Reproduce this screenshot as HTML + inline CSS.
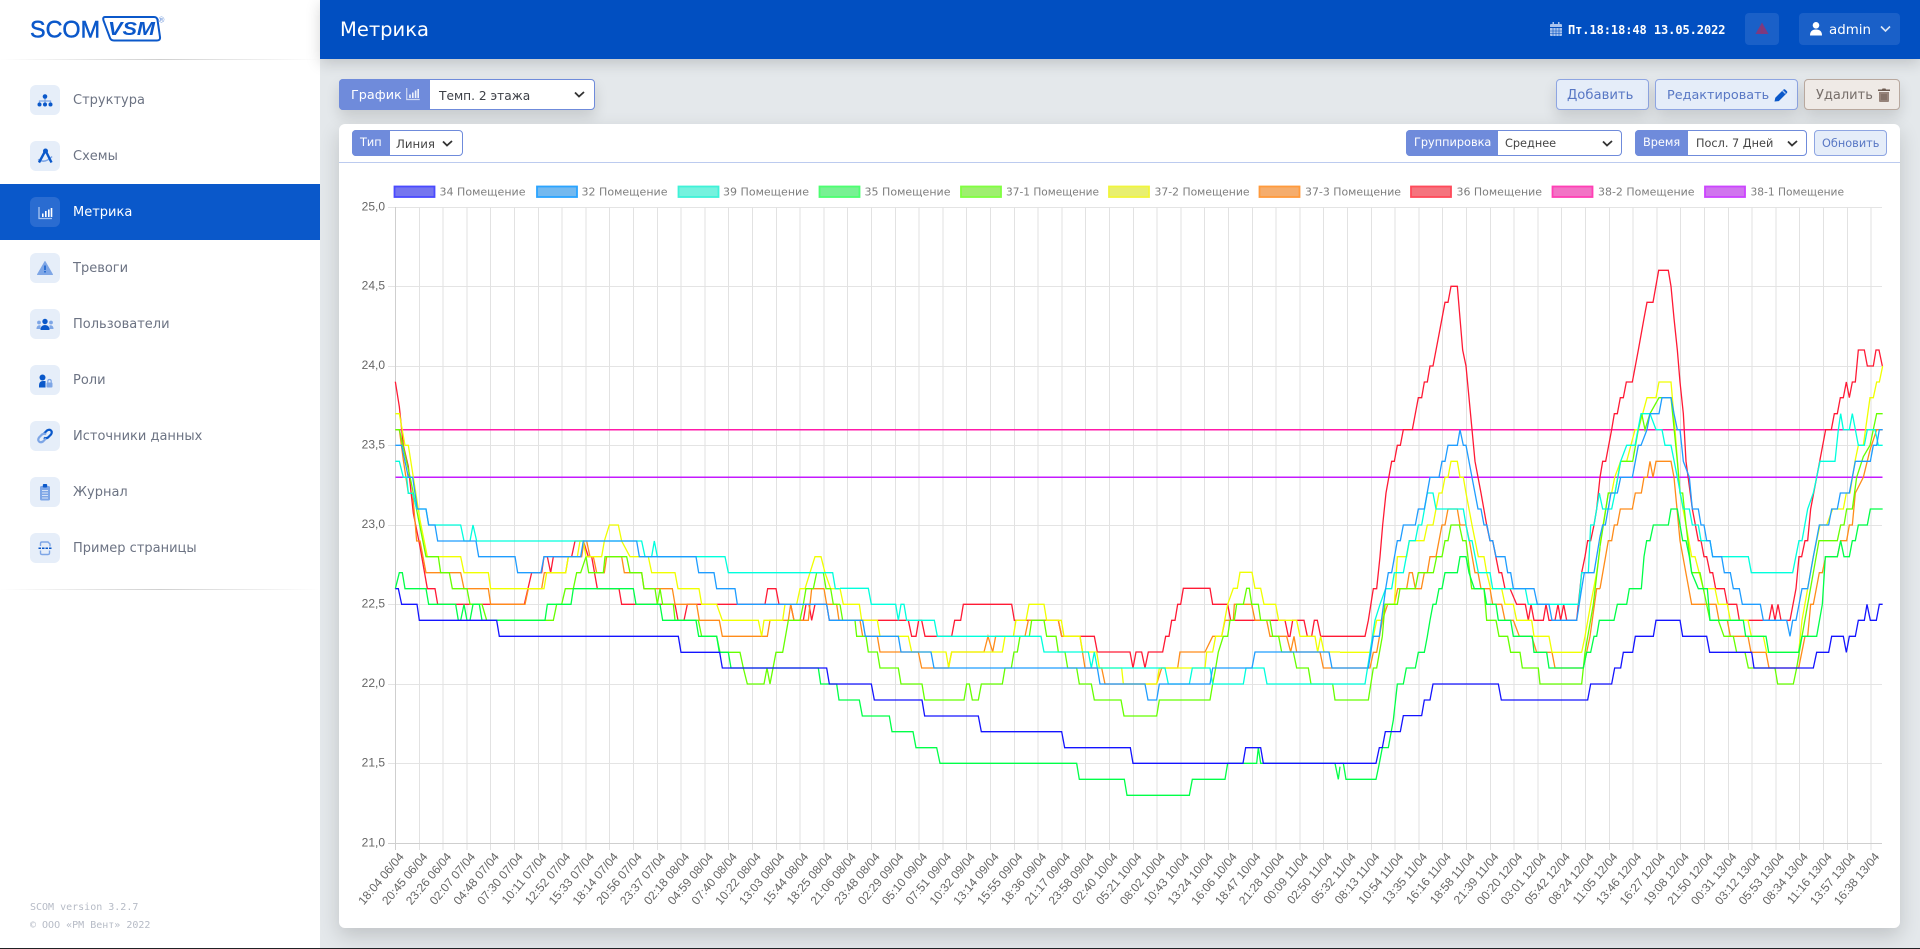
<!DOCTYPE html>
<html lang="ru">
<head>
<meta charset="utf-8">
<title>Метрика</title>
<style>
*{box-sizing:border-box}
html,body{margin:0;padding:0}
body{position:relative;width:1920px;height:949px;overflow:hidden;background:#e4e8eb;font-family:"DejaVu Sans","Liberation Sans",sans-serif;color:#333}
.abs{position:absolute}
#sidebar{position:absolute;left:0;top:0;width:320px;height:949px;background:#fff}
.hr{position:absolute;left:0;width:320px;height:1px;background:linear-gradient(90deg,rgba(200,200,200,0),#d0d0d0 50%,rgba(200,200,200,0))}
.item{position:absolute;left:0;width:320px;height:56px;font-size:13px;color:#6c7383;line-height:56px}
.item.on{background:#0a58ca;color:#fff}
.item .ico{position:absolute;left:30px;top:13px;width:30px;height:30px;border-radius:6px;background:#e6eef9}
.item.on .ico{background:#2a6cd1}
.item span{position:absolute;left:73px;top:1px}
.item svg{display:block}
#foot{position:absolute;left:30px;top:899px;font:10px/17.5px "DejaVu Sans Mono","Liberation Mono",monospace;color:#b6bbc6;white-space:nowrap}
#head{position:absolute;left:320px;top:0;width:1600px;height:59px;background:#014fc1;box-shadow:0 4px 14px rgba(0,0,0,.16)}
#title{position:absolute;left:340px;top:17px;font-size:19.5px;line-height:26px;color:#fff}
#date{position:absolute;left:1568px;top:22px;font:bold 12px/16px "DejaVu Sans Mono","Liberation Mono",monospace;color:#fff;white-space:nowrap;letter-spacing:-.07px}
.hbtn{position:absolute;top:13px;height:32px;border-radius:4px;background:#1a60c8}
.btn{position:absolute;border:1px solid #8ea5e2;background:#e5edf9;color:#5877c4;border-radius:4px;font-size:13.2px;white-space:nowrap;text-align:left}
.sh{box-shadow:0 7px 14px rgba(0,0,0,.13)}
.grp{position:absolute;border:1px solid #6f8bdb;border-radius:4px;background:#fff;white-space:nowrap;color:#444}
.grp .l{position:absolute;left:-1px;top:-1px;bottom:-1px;background:#6f8bdb;color:#fff;border-radius:4px 0 0 4px}
.grp .t{position:absolute;color:#444}
.chev{position:absolute}
#card{position:absolute;left:339px;top:124px;width:1561px;height:804px;background:#fff;border-radius:6px;box-shadow:0 8px 20px rgba(0,0,0,.16)}
#sep{position:absolute;left:339px;top:162px;width:1561px;height:1px;background:#bccbef}
#chart{position:absolute;left:0;top:0;width:1920px;height:949px}
#bottom{position:absolute;left:0;top:948px;width:1920px;height:1px;background:#202124}
.s{fill:none;stroke-width:3.9;stroke-linejoin:miter}
.c34{stroke:#1414ff}.c32{stroke:#1f9dff}.c39{stroke:#00ffdd}.c35{stroke:#00ff48}.c371{stroke:#66ff00}.c372{stroke:#f0ff00}.c373{stroke:#ff8c1a}.c36{stroke:#ff1a35}
</style>
</head>
<body>

<div id="sidebar">
  <svg class="abs" style="left:0;top:0" width="180" height="58">
    <text x="30" y="37.5" font-family="Liberation Sans,sans-serif" font-size="24.5" fill="#0b58ca" stroke="#0b58ca" stroke-width=".5" textLength="70" lengthAdjust="spacingAndGlyphs">SCOM</text>
    <path d="M105 17H154Q157 17 157.5 20L160 37Q160.5 40.5 157 40.5H114Q111 40.5 110 38L103.5 20.5Q102.5 17 105 17Z" fill="none" stroke="#0b58ca" stroke-width="2"/>
    <text x="108" y="35" font-family="Liberation Sans,sans-serif" font-weight="700" font-style="italic" font-size="18" fill="#0b58ca" textLength="47" lengthAdjust="spacingAndGlyphs">VSM</text>
    <text x="158.5" y="22.5" font-family="Liberation Sans,sans-serif" font-size="8" fill="#5d8ad6">®</text>
  </svg>
  <div class="hr" style="top:59px"></div>

  <div class="item" style="top:72px"><div class="ico"><svg width="30" height="30"><path d="M15 12v4M9.500 19v-3h11v3M15 16v3" fill="none" stroke="#7ea6e6" stroke-width="1.300"/><circle cx="15" cy="11.500" r="2.300" fill="#0a58ca"/><circle cx="9.500" cy="19.500" r="2" fill="#0a58ca"/><circle cx="15" cy="19.500" r="2" fill="#0a58ca"/><circle cx="20.500" cy="19.500" r="2" fill="#0a58ca"/></svg></div><span>Структура</span></div>
  <div class="item" style="top:128px"><div class="ico"><svg width="30" height="30"><path d="M8 18.500Q15 23 22 15.500" fill="none" stroke="#7ea6e6" stroke-width="1.500"/><path d="M15.500 9.500L9 21.500M15.500 9.500L21.500 21.500" fill="none" stroke="#0a58ca" stroke-width="2.400"/><circle cx="15.500" cy="10" r="2.500" fill="#0a58ca"/></svg></div><span>Схемы</span></div>
  <div class="item on" style="top:184px"><div class="ico"><svg width="30" height="30"><path d="M9 10v11.500h13" fill="none" stroke="#a8c6f2" stroke-width="1.300"/><path d="M12 16.500h1.600v3.500H12zM15 14h1.600v6H15zM18 12.500h1.600V20H18zM20.700 11h1.600v9h-1.600z" fill="#fff"/></svg></div><span>Метрика</span></div>
  <div class="item" style="top:240px"><div class="ico"><svg width="30" height="30"><path d="M15 8.500L22.500 21.500H7.500Z" fill="#7ea6e6" stroke="#7ea6e6" stroke-linejoin="round"/><path d="M14.300 12.500h1.400v4.500h-1.400zM14.300 18h1.400v1.500h-1.400z" fill="#0a58ca"/></svg></div><span>Тревоги</span></div>
  <div class="item" style="top:296px"><div class="ico"><svg width="30" height="30"><circle cx="9" cy="13.500" r="1.900" fill="#7ea6e6"/><circle cx="21" cy="13.500" r="1.900" fill="#7ea6e6"/><path d="M6.500 20q0-3.800 3-3.800h1v3.800zM23.500 20q0-3.800-3-3.800h-1v3.800z" fill="#7ea6e6"/><circle cx="15" cy="12.500" r="2.700" fill="#0a58ca"/><path d="M10.500 21q0-5 4.500-5t4.500 5z" fill="#0a58ca"/></svg></div><span>Пользователи</span></div>
  <div class="item" style="top:352px"><div class="ico"><svg width="30" height="30"><circle cx="12.500" cy="12.500" r="3" fill="#0a58ca"/><path d="M9 22.500v-2q0-4.500 4-4.500h2.500v6.500z" fill="#0a58ca"/><rect x="16.500" y="17.500" width="6" height="5" rx="1" fill="#7ea6e6"/><path d="M17.800 17.500v-1.300q0-1.700 1.700-1.700t1.700 1.700v1.300" fill="none" stroke="#7ea6e6" stroke-width="1.200"/></svg></div><span>Роли</span></div>
  <div class="item" style="top:408px"><div class="ico"><svg width="30" height="30"><path d="M14 12.500l3-3q2.500-1.500 4 0t0 4l-3 3q-2.500 1.500-4 0" fill="none" stroke="#0a58ca" stroke-width="2.200"/><path d="M16 17.500l-3 3q-2.500 1.500-4 0t0-4l3-3q2.500-1.500 4 0" fill="none" stroke="#7ea6e6" stroke-width="2.200"/></svg></div><span>Источники данных</span></div>
  <div class="item" style="top:464px"><div class="ico"><svg width="30" height="30"><rect x="10" y="9" width="10" height="14.500" rx="1.500" fill="#7ea6e6"/><rect x="12.800" y="7" width="4.400" height="3.500" rx="1" fill="#0a58ca"/><path d="M12 13.500h6M12 16h6M12 18.500h6M12 21h6" stroke="#d6e3f7" stroke-width=".9"/></svg></div><span>Журнал</span></div>
  <div class="item" style="top:520px"><div class="ico"><svg width="30" height="30"><path d="M10.500 13v-2.500q0-1.500 1.500-1.500h6l2 2v2.500M10.500 17.500v2.500q0 1.500 1.500 1.500h6q1.500 0 1.500-1.500v-2.500" fill="none" stroke="#7ea6e6" stroke-width="1.400"/><path d="M8.500 15.300h13" stroke="#0a58ca" stroke-width="1.500" stroke-dasharray="2.500 1"/></svg></div><span>Пример страницы</span></div>

  <div class="hr" style="top:589px"></div>
  <div id="foot">SCOM version 3.2.7<br>© ООО «РМ Вент» 2022</div>
</div>

<div id="head"></div>
<div id="title">Метрика</div>
<svg class="abs" style="left:1550px;top:22px" width="12" height="14"><path d="M0 3q0-1 1-1h1.500V0h1.500v2h4V0h1.500v2H11q1 0 1 1v2H0zM0 6h12v7q0 1-1 1H1q-1 0-1-1z" fill="#a9c3ee"/><path d="M3 6v8M6 6v8M9 6v8M0 9h12M0 11.500h12" stroke="#014fc1" stroke-width=".6"/></svg>
<div id="date">Пт.18:18:48 13.05.2022</div>
<div class="hbtn" style="left:1745px;width:34px"><svg class="abs" style="left:10px;top:9px" width="14" height="13"><path d="M7 .5L13.500 12H.5Z" fill="#7b3a82"/><path d="M6.500 4.500h1v4h-1zM6.500 9.300h1v1.300h-1z" fill="#96365f"/></svg></div>
<div class="hbtn" style="left:1799px;width:101px"><svg class="abs" style="left:11px;top:9px" width="12" height="14"><circle cx="6" cy="3.300" r="3.300" fill="#fff"/><path d="M0 13.500q0-6 6-6t6 6z" fill="#fff"/></svg><span class="abs" style="left:30px;top:9px;font-size:13.400px;line-height:17px;color:#fff">admin</span><svg class="abs" style="left:81px;top:12px" width="11" height="8"><path d="M1 1.500L5.500 6 10 1.500" fill="none" stroke="#dbe6f7" stroke-width="1.600"/></svg></div>

<!-- top controls -->
<div class="grp sh" style="left:339px;top:79px;width:256px;height:31px">
  <div class="l" style="width:91px"><span class="abs" style="left:12px;top:9px;font-size:12.800px;line-height:16px">График</span><svg class="abs" style="left:67px;top:8px" width="14" height="14"><path d="M.7 1v11.500h13" fill="none" stroke="#cdd8f3" stroke-width="1.200"/><path d="M3.200 7.500h1.600V11H3.200zM6 5.500h1.600V11H6zM8.800 3.500h1.600V11H8.800zM11.400 2h1.600v9h-1.600z" fill="#eef2fb"/></svg></div>
  <span class="t" style="left:99px;top:8px;font-size:12.200px;line-height:16px;color:#3c3f46">Темп. 2 этажа</span>
  <svg class="chev" style="left:234px;top:11px" width="11" height="8"><path d="M1 1.500L5 5.500 10 1" fill="none" stroke="#333" stroke-width="1.800"/></svg>
</div>

<div class="btn sh" style="left:1556px;top:79px;width:93px;height:31px"><span class="abs" style="left:10px;top:7px;line-height:17px">Добавить</span></div>
<div class="btn sh" style="left:1655px;top:79px;width:143px;height:31px"><span class="abs" style="left:11px;top:7px;line-height:17px;font-size:12.800px">Редактировать</span><svg class="abs" style="left:118px;top:8px" width="14" height="14"><path d="M.5 13.500l.8-3.800 8-8q1-1 2.100 0l1.400 1.400q1 1 0 2l-8 8z" fill="#0a58ca"/><path d="M8.500 2.500l3 3" stroke="#a8c5f0" stroke-width="1.300"/></svg></div>
<div class="btn sh" style="left:1804px;top:79px;width:96px;height:31px;background:#efeae6;border-color:#b8a89e;color:#766e6a"><span class="abs" style="left:11px;top:7px;line-height:17px;font-size:13px">Удалить</span><svg class="abs" style="left:73px;top:8px" width="12" height="14"><path d="M0 1.500h4l.5-1h3l.5 1h4v1.500H0z" fill="#6c5a50"/><path d="M1 4h10v9q0 1-1 1H2q-1 0-1-1z" fill="#96837a"/><path d="M4 6v6M6 6v6M8 6v6" stroke="#6c5a50" stroke-width=".8"/></svg></div>

<div id="card"></div>
<div id="sep"></div>

<!-- card toolbar -->
<div class="grp" style="left:352px;top:130px;width:111px;height:26px">
  <div class="l" style="width:38px"><span class="abs" style="left:8px;top:6px;font-size:11.300px;line-height:14px">Тип</span></div>
  <span class="t" style="left:43px;top:6px;font-size:11.800px;line-height:14px">Линия</span>
  <svg class="chev" style="left:89px;top:9px" width="11" height="8"><path d="M1 1.500L5 5.500 10 1" fill="none" stroke="#333" stroke-width="1.800"/></svg>
</div>
<div class="grp" style="left:1406px;top:130px;width:216px;height:26px">
  <div class="l" style="width:92px"><span class="abs" style="left:8px;top:6px;font-size:11.300px;line-height:14px">Группировка</span></div>
  <span class="t" style="left:98px;top:6px;font-size:11.300px;line-height:14px">Среднее</span>
  <svg class="chev" style="left:195px;top:9px" width="11" height="8"><path d="M1 1.500L5 5.500 10 1" fill="none" stroke="#333" stroke-width="1.800"/></svg>
</div>
<div class="grp" style="left:1635px;top:130px;width:172px;height:26px">
  <div class="l" style="width:53px"><span class="abs" style="left:8px;top:6px;font-size:11.300px;line-height:14px">Время</span></div>
  <span class="t" style="left:60px;top:6px;font-size:11.300px;line-height:14px">Посл. 7 Дней</span>
  <svg class="chev" style="left:151px;top:9px" width="11" height="8"><path d="M1 1.500L5 5.500 10 1" fill="none" stroke="#333" stroke-width="1.800"/></svg>
</div>
<div class="btn" style="left:1814px;top:130px;width:73px;height:26px;font-size:11.300px"><span class="abs" style="left:7px;top:6px;line-height:14px">Обновить</span></div>

<svg id="chart" viewBox="0 0 1920 949">
  <!-- legend -->
  <g stroke-width="1.800">
    <rect x="394.500" y="186.500" width="40" height="10.500" fill="#7575ef" stroke="#4a4aff"/>
    <rect x="537" y="186.500" width="40" height="10.500" fill="#74b9ef" stroke="#2aa4ff"/>
    <rect x="678.500" y="186.500" width="40" height="10.500" fill="#75f2de" stroke="#3ff2d8"/>
    <rect x="819.500" y="186.500" width="40" height="10.500" fill="#78f193" stroke="#4cff70"/>
    <rect x="961" y="186.500" width="40" height="10.500" fill="#9fef70" stroke="#80ff40"/>
    <rect x="1109" y="186.500" width="40" height="10.500" fill="#e8ef70" stroke="#f0f53c"/>
    <rect x="1259.500" y="186.500" width="40" height="10.500" fill="#f5ad6d" stroke="#ff9a3c"/>
    <rect x="1411" y="186.500" width="40" height="10.500" fill="#f5747e" stroke="#ff4a5a"/>
    <rect x="1552.500" y="186.500" width="40" height="10.500" fill="#f273c5" stroke="#ff3fb5"/>
    <rect x="1705" y="186.500" width="40" height="10.500" fill="#d075ee" stroke="#cc44ff"/>
  </g>
  <g font-family="DejaVu Sans,Liberation Sans,sans-serif" font-size="11" fill="#7d7d7d">
    <text x="439.500" y="195.500" textLength="86" lengthAdjust="spacingAndGlyphs">34 Помещение</text>
    <text x="581.500" y="195.500" textLength="86" lengthAdjust="spacingAndGlyphs">32 Помещение</text>
    <text x="723" y="195.500" textLength="86" lengthAdjust="spacingAndGlyphs">39 Помещение</text>
    <text x="864.500" y="195.500" textLength="86" lengthAdjust="spacingAndGlyphs">35 Помещение</text>
    <text x="1006" y="195.500" textLength="93" lengthAdjust="spacingAndGlyphs">37-1 Помещение</text>
    <text x="1154.500" y="195.500" textLength="95" lengthAdjust="spacingAndGlyphs">37-2 Помещение</text>
    <text x="1305" y="195.500" textLength="96" lengthAdjust="spacingAndGlyphs">37-3 Помещение</text>
    <text x="1456.500" y="195.500" textLength="85.500" lengthAdjust="spacingAndGlyphs">36 Помещение</text>
    <text x="1598" y="195.500" textLength="96.500" lengthAdjust="spacingAndGlyphs">38-2 Помещение</text>
    <text x="1750.500" y="195.500" textLength="93.500" lengthAdjust="spacingAndGlyphs">38-1 Помещение</text>
  </g>

  <!-- grid -->
  <path shape-rendering="crispEdges" fill="none" stroke="#e4e4e4" stroke-width="1" d="M388 207.500H1882M388 286.500H1882M388 366.500H1882M388 445.500H1882M388 525.500H1882M388 604.500H1882M388 684.500H1882M388 763.500H1882"/>
  <path shape-rendering="crispEdges" fill="none" stroke="#e2e2e2" stroke-width="1" d="M419.300 207V850M443.100 207V850M466.900 207V850M490.700 207V850M514.500 207V850M538.300 207V850M562.100 207V850M585.900 207V850M609.700 207V850M633.500 207V850M657.300 207V850M681.100 207V850M704.900 207V850M728.700 207V850M752.500 207V850M776.300 207V850M800.100 207V850M823.900 207V850M847.700 207V850M871.500 207V850M895.300 207V850M919.100 207V850M942.900 207V850M966.700 207V850M990.500 207V850M1014.300 207V850M1038.100 207V850M1061.900 207V850M1085.700 207V850M1109.500 207V850M1133.300 207V850M1157.100 207V850M1180.900 207V850M1204.700 207V850M1228.500 207V850M1252.300 207V850M1276.100 207V850M1299.900 207V850M1323.700 207V850M1347.500 207V850M1371.300 207V850M1395.100 207V850M1418.900 207V850M1442.700 207V850M1466.500 207V850M1490.300 207V850M1514.100 207V850M1537.900 207V850M1561.700 207V850M1585.500 207V850M1609.300 207V850M1633.100 207V850M1656.900 207V850M1680.700 207V850M1704.500 207V850M1728.300 207V850M1752.100 207V850M1775.900 207V850M1799.700 207V850M1823.500 207V850M1847.300 207V850M1871.100 207V850"/>
  <path shape-rendering="crispEdges" fill="none" stroke="#cfcfcf" stroke-width="1" d="M395.500 207V850M388 843.500H1882"/>

  <!-- y labels -->
  <g font-family="Liberation Sans,Arial,sans-serif" font-size="12" fill="#666" text-anchor="end">
    <text x="385" y="210.500">25,0</text><text x="385" y="289.500">24,5</text><text x="385" y="369">24,0</text><text x="385" y="448.500">23,5</text><text x="385" y="528">23,0</text><text x="385" y="607.500">22,5</text><text x="385" y="687">22,0</text><text x="385" y="766.500">21,5</text><text x="385" y="846.500">21,0</text>
  </g>

  <!-- x labels -->
  <g font-family="Liberation Sans,Arial,sans-serif" font-size="12" fill="#666" text-anchor="end" transform="translate(9,857)">
    <text transform="translate(395.500) rotate(-50)">18:04 06/04</text>
    <text transform="translate(419.300) rotate(-50)">20:45 06/04</text>
    <text transform="translate(443.100) rotate(-50)">23:26 06/04</text>
    <text transform="translate(466.900) rotate(-50)">02:07 07/04</text>
    <text transform="translate(490.700) rotate(-50)">04:48 07/04</text>
    <text transform="translate(514.500) rotate(-50)">07:30 07/04</text>
    <text transform="translate(538.300) rotate(-50)">10:11 07/04</text>
    <text transform="translate(562.100) rotate(-50)">12:52 07/04</text>
    <text transform="translate(585.900) rotate(-50)">15:33 07/04</text>
    <text transform="translate(609.700) rotate(-50)">18:14 07/04</text>
    <text transform="translate(633.500) rotate(-50)">20:56 07/04</text>
    <text transform="translate(657.300) rotate(-50)">23:37 07/04</text>
    <text transform="translate(681.100) rotate(-50)">02:18 08/04</text>
    <text transform="translate(704.900) rotate(-50)">04:59 08/04</text>
    <text transform="translate(728.700) rotate(-50)">07:40 08/04</text>
    <text transform="translate(752.500) rotate(-50)">10:22 08/04</text>
    <text transform="translate(776.300) rotate(-50)">13:03 08/04</text>
    <text transform="translate(800.100) rotate(-50)">15:44 08/04</text>
    <text transform="translate(823.900) rotate(-50)">18:25 08/04</text>
    <text transform="translate(847.700) rotate(-50)">21:06 08/04</text>
    <text transform="translate(871.500) rotate(-50)">23:48 08/04</text>
    <text transform="translate(895.300) rotate(-50)">02:29 09/04</text>
    <text transform="translate(919.100) rotate(-50)">05:10 09/04</text>
    <text transform="translate(942.900) rotate(-50)">07:51 09/04</text>
    <text transform="translate(966.700) rotate(-50)">10:32 09/04</text>
    <text transform="translate(990.500) rotate(-50)">13:14 09/04</text>
    <text transform="translate(1014.300) rotate(-50)">15:55 09/04</text>
    <text transform="translate(1038.100) rotate(-50)">18:36 09/04</text>
    <text transform="translate(1061.900) rotate(-50)">21:17 09/04</text>
    <text transform="translate(1085.700) rotate(-50)">23:58 09/04</text>
    <text transform="translate(1109.500) rotate(-50)">02:40 10/04</text>
    <text transform="translate(1133.300) rotate(-50)">05:21 10/04</text>
    <text transform="translate(1157.100) rotate(-50)">08:02 10/04</text>
    <text transform="translate(1180.900) rotate(-50)">10:43 10/04</text>
    <text transform="translate(1204.700) rotate(-50)">13:24 10/04</text>
    <text transform="translate(1228.500) rotate(-50)">16:06 10/04</text>
    <text transform="translate(1252.300) rotate(-50)">18:47 10/04</text>
    <text transform="translate(1276.100) rotate(-50)">21:28 10/04</text>
    <text transform="translate(1299.900) rotate(-50)">00:09 11/04</text>
    <text transform="translate(1323.700) rotate(-50)">02:50 11/04</text>
    <text transform="translate(1347.500) rotate(-50)">05:32 11/04</text>
    <text transform="translate(1371.300) rotate(-50)">08:13 11/04</text>
    <text transform="translate(1395.100) rotate(-50)">10:54 11/04</text>
    <text transform="translate(1418.900) rotate(-50)">13:35 11/04</text>
    <text transform="translate(1442.700) rotate(-50)">16:16 11/04</text>
    <text transform="translate(1466.500) rotate(-50)">18:58 11/04</text>
    <text transform="translate(1490.300) rotate(-50)">21:39 11/04</text>
    <text transform="translate(1514.100) rotate(-50)">00:20 12/04</text>
    <text transform="translate(1537.900) rotate(-50)">03:01 12/04</text>
    <text transform="translate(1561.700) rotate(-50)">05:42 12/04</text>
    <text transform="translate(1585.500) rotate(-50)">08:24 12/04</text>
    <text transform="translate(1609.300) rotate(-50)">11:05 12/04</text>
    <text transform="translate(1633.100) rotate(-50)">13:46 12/04</text>
    <text transform="translate(1656.900) rotate(-50)">16:27 12/04</text>
    <text transform="translate(1680.700) rotate(-50)">19:08 12/04</text>
    <text transform="translate(1704.500) rotate(-50)">21:50 12/04</text>
    <text transform="translate(1728.300) rotate(-50)">00:31 13/04</text>
    <text transform="translate(1752.100) rotate(-50)">03:12 13/04</text>
    <text transform="translate(1775.900) rotate(-50)">05:53 13/04</text>
    <text transform="translate(1799.700) rotate(-50)">08:34 13/04</text>
    <text transform="translate(1823.500) rotate(-50)">11:16 13/04</text>
    <text transform="translate(1847.300) rotate(-50)">13:57 13/04</text>
    <text transform="translate(1871.100) rotate(-50)">16:38 13/04</text>
  </g>

  <!-- constant lines -->
  <path d="M395.500 477.300H1882.500" stroke="#c41aff" stroke-width="1.500" fill="none"/>
  <path d="M395.500 429.700H1882.500" stroke="#ff1aaa" stroke-width="1.500" fill="none"/>

  <!-- series drawn back-to-front -->
  <g transform="translate(340,400) scale(.33333)">
    <polyline class="s c36" points="166,-55 178,20 190,136 205,200 220,340 240,440 262,566 285,566 293,613 553,613 575,518 605,518 612,470 622,470 632,518 640,470 695,470 705,423 730,423 745,470 755,470 772,566 837,566 845,613 1005,613 1014,661 1032,661 1042,613 1275,613 1283,566 1308,566 1317,613 1352,613 1362,661 1390,661 1398,613 1407,613 1415,661 1425,613 1460,613 1468,661 1500,661"/>
    <polyline class="s c373" points="166,89 178,89 190,180 205,280 218,280 230,423 240,423 258,518 362,518 372,566 445,566 452,613 555,613 565,566 605,566 613,518 677,518 685,470 725,470 732,423 740,423 750,470 760,470 770,518 793,518 800,470 845,470 853,518 905,518 912,566 997,566 1005,613 1070,613 1078,661 1138,661 1147,709 1282,709 1290,661 1345,661 1352,613 1362,661 1405,661 1415,566 1452,566 1460,613 1490,613 1497,661 1500,661"/>
    <polyline class="s c372" points="166,41 178,41 195,136 205,136 215,200 240,360 262,470 362,470 372,518 445,518 452,566 612,566 620,518 677,518 685,470 712,470 720,423 730,423 738,470 785,470 793,423 808,375 835,375 845,423 870,470 925,470 935,518 1005,518 1014,566 1077,566 1085,613 1130,613 1147,661 1255,661 1265,709 1272,661 1328,661 1335,613 1370,613 1380,566 1395,566 1410,518 1425,470 1443,470 1455,518 1472,566 1500,566"/>
    <polyline class="s c371" points="166,89 178,89 210,230 258,470 295,470 302,518 328,518 337,566 381,566 390,613 426,613 440,661 640,661 650,613 665,613 676,566 700,566 710,518 722,518 738,470 746,518 790,518 795,470 860,470 870,518 905,518 912,566 945,566 952,613 960,566 968,613 1000,613 1005,661 1075,661 1085,709 1130,709 1140,757 1200,757 1210,804 1222,852 1272,852 1281,804 1290,852 1308,757 1328,757 1345,661 1380,661 1390,613 1398,566 1420,566 1430,518 1450,518 1458,566 1472,566 1480,613 1500,613"/>
    <polyline class="s c35" points="166,566 178,518 187,518 195,566 258,566 266,613 347,613 355,661 362,661 372,613 381,661 390,661 399,613 418,613 426,661 615,661 622,613 693,613 700,566 880,566 888,613 960,613 968,661 1068,661 1076,709 1130,709 1138,757 1165,757 1173,804 1435,804 1442,852 1490,852 1497,900 1500,900"/>
    <polyline class="s c39" points="166,184 178,184 190,232 200,232 205,280 218,280 230,327 258,327 266,375 362,375 372,423 390,423 399,375 410,423 905,423 915,470 935,470 943,423 952,470 1155,470 1165,518 1478,518 1486,566 1500,566"/>
    <polyline class="s c32" points="166,136 185,136 195,184 205,232 218,232 232,327 258,327 266,375 285,375 293,423 408,423 416,470 525,470 533,518 603,518 612,470 722,470 730,423 890,423 898,470 1068,470 1076,518 1122,518 1130,566 1185,566 1192,613 1460,613 1468,661 1500,661"/>
    <polyline class="s c34" points="166,566 175,566 185,613 231,613 238,661 470,661 478,709 1015,709 1023,757 1139,757 1147,804 1460,804 1468,852 1500,852"/>
  </g>
  <g transform="translate(840,500) scale(.33333)">
    <polyline class="s c36" points="0,361 205,361 215,409 228,409 236,361 245,361 255,409 335,409 344,361 362,361 370,313 515,313 523,361 655,361 665,409 763,409 772,456 870,456 879,504 888,456 905,456 915,504 925,456 968,456 977,409 987,409 995,361 1005,361 1013,313 1022,313 1030,265 1110,265 1118,313 1163,313 1172,361 1335,361 1345,409 1350,409 1358,361 1392,361 1402,409 1415,409 1423,361 1432,361 1442,409 1500,409"/>
    <polyline class="s c373" points="0,361 60,361 68,409 112,409 120,456 235,456 245,504 325,504 335,456 432,456 444,409 458,456 467,409 555,409 565,361 655,361 665,409 720,409 735,504 785,504 795,552 950,552 965,504 1013,504 1020,456 1095,456 1118,409 1145,409 1155,361 1180,361 1183,313 1235,313 1245,361 1280,361 1290,409 1340,409 1352,456 1362,409 1370,456 1440,456 1450,504 1500,504"/>
    <polyline class="s c372" points="0,265 10,313 58,313 65,361 112,361 120,409 205,409 215,456 318,456 326,504 335,456 487,456 495,409 520,409 528,361 558,361 567,313 612,313 620,361 664,361 672,409 720,409 728,456 770,456 778,504 845,504 850,552 950,552 958,504 1095,504 1100,456 1118,456 1127,409 1145,409 1163,313 1180,265 1192,265 1200,217 1236,217 1245,265 1262,265 1272,313 1307,313 1316,361 1370,361 1380,409 1425,409 1433,456 1442,409 1452,456 1500,456"/>
    <polyline class="s c371" points="0,313 8,361 45,361 50,409 78,409 85,456 112,456 120,504 175,504 183,552 246,552 254,600 372,600 380,552 388,552 397,600 415,600 424,552 487,552 495,504 514,504 522,456 532,456 540,409 568,409 575,361 612,361 620,409 648,409 655,456 675,456 683,504 710,504 718,552 754,552 763,600 843,600 852,648 950,648 958,600 1110,600 1118,552 1127,504 1135,456 1150,409 1163,409 1170,361 1183,361 1190,313 1210,313 1220,265 1228,265 1235,313 1255,313 1262,361 1290,361 1298,409 1316,409 1325,456 1360,456 1370,504 1405,504 1413,552 1478,552 1485,600 1500,600"/>
    <polyline class="s c35" points="0,600 58,600 67,648 148,648 156,695 219,695 228,743 290,743 300,790 710,790 718,838 853,838 861,886 1048,886 1057,838 1155,838 1163,790 1250,790 1255,743 1262,790 1485,790 1495,838 1500,800"/>
    <polyline class="s c39" points="0,265 85,265 94,313 167,313 175,361 183,313 192,313 200,361 283,361 292,409 603,409 612,456 745,456 754,504 763,456 772,504 975,504 985,552 1048,552 1057,504 1110,504 1118,552 1210,552 1218,504 1272,504 1281,552 1500,552"/>
    <polyline class="s c32" points="0,361 68,361 76,409 175,409 183,456 273,456 282,504 772,504 780,552 915,552 924,600 950,600 958,552 1110,552 1118,504 1236,504 1245,456 1467,456 1476,504 1500,504"/>
    <polyline class="s c34" points="0,552 94,552 103,600 246,600 254,648 415,648 424,695 665,695 674,743 871,743 879,790 1209,790 1217,743 1262,743 1270,790 1500,790"/>
  </g>
  <g transform="translate(1340,250) scale(.33333)">
    <polyline class="s c36" points="0,1159 75,1159 85,1111 100,1016 110,1016 120,920 128,825 138,729 155,634 163,634 172,586 181,586 190,539 217,539 235,443 245,443 253,396 262,396 270,348 279,348 297,253 315,157 324,157 333,109 352,109 360,205 368,300 378,348 387,443 405,634 423,729 440,825 450,872 458,872 477,968 485,968 495,1016 510,1016 530,1063 556,1063 565,1111 573,1063 582,1111 610,1111 618,1063 627,1111 645,1111 654,1063 662,1111 671,1063 680,1111 710,1111 725,968 735,920 743,872 752,872 762,825 770,777 780,682"/>
    <polyline class="s c373" points="0,1254 90,1254 100,1207 110,1207 127,1111 143,1063 163,1063 173,1016 200,1016 208,968 217,968 226,1016 244,1016 253,968 262,968 270,920 288,920 297,872 306,825 315,825 324,777 352,777 360,825 378,825 388,872 405,968 414,968 423,1016 450,1016 458,1063 485,1063 495,1111 520,1111 538,1159 575,1159 590,1207 636,1207 645,1254 730,1254 750,1159 770,1016 780,1016"/>
    <polyline class="s c372" points="0,1207 90,1207 100,1159 110,1111 125,1111 135,1063 163,1063 172,920 200,920 208,872 252,872 262,825 279,825 297,729 306,729 315,682 324,682 333,634 352,634 360,682 370,682 378,729 396,825 415,920 432,920 440,968 452,1016 485,1016 495,1063 520,1063 530,1111 575,1111 582,1159 627,1159 636,1207 725,1207 735,1159 752,1063 770,968 780,896"/>
    <polyline class="s c371" points="0,1350 85,1350 100,1254 110,1254 127,1159 135,1063 172,1063 180,1016 226,1016 235,968 280,968 290,920 306,920 315,872 324,872 333,825 358,825 368,872 378,872 395,1016 432,1016 440,1111 468,1111 477,1159 503,1159 512,1207 540,1207 547,1254 595,1254 600,1302 725,1302 735,1207 760,1063 780,890"/>
    <polyline class="s c35" points="0,1540 10,1540 18,1588 108,1588 118,1540 127,1493 145,1493 160,1410 172,1302 190,1302 199,1254 226,1254 235,1207 253,1207 262,1159 270,1111 279,1063 288,1063 297,1016 306,1016 315,968 352,968 360,920 378,920 387,968 403,1016 432,1016 440,1063 468,1063 475,1111 512,1111 520,1159 577,1159 582,1207 620,1207 627,1254 730,1254 740,1207 752,1207 762,1159 770,1159 778,1111 780,1111"/>
    <polyline class="s c39" points="0,1302 75,1302 90,1207 105,1111 120,1063 137,1016 155,1016 163,968 190,968 208,872 226,872 235,825 245,825 262,729 279,729 288,777 370,777 378,825 387,872 396,872 415,968 450,968 458,1016 556,1016 565,1063 716,1063 725,968 745,968 752,825 762,825 778,729 780,739"/>
    <polyline class="s c32" points="0,1254 85,1254 100,1159 118,1159 137,1016 145,968 155,968 172,872 181,872 190,825 226,825 235,777 253,777 270,682 297,682 306,634 315,634 324,586 352,586 360,539 370,586 378,586 396,682 414,777 423,777 432,825 441,825 450,872 458,872 468,920 495,920 503,968 512,968 520,1016 582,1016 592,1063 627,1063 636,1111 710,1111 725,1016 733,968 762,968 780,860"/>
    <polyline class="s c34" points="0,1540 108,1540 118,1493 127,1493 136,1445 181,1445 190,1397 245,1397 253,1350 270,1350 279,1302 475,1302 484,1350 743,1350 752,1302 780,1302"/>
  </g>
  <g transform="translate(1600,250) scale(.33333)">
    <polyline class="s c36" points="0,682 8,634 17,634 35,539 43,491 52,491 61,443 70,443 79,396 97,396 115,300 132,205 141,157 159,157 176,61 205,61 213,109 222,205 232,300 240,396 250,491 258,634 277,777 295,872 303,872 312,920 320,920 330,968 338,968 347,1016 373,1016 382,1063 410,1063 418,1111 507,1111 516,1063 525,1111 534,1063 543,1111 570,1111 588,1016 597,920 605,920 615,872 623,872 632,777 650,682 677,539 694,539 703,491 712,491 721,443 730,443 739,396 748,443 757,396 766,396 775,300 793,300 802,348 820,348 828,300 837,300 847,348"/>
    <polyline class="s c373" points="0,1016 25,872 35,872 43,825 52,825 61,777 97,777 106,729 124,729 132,682 142,682 150,634 159,682 168,634 213,634 222,682 240,872 275,1063 348,1063 357,1111 382,1111 391,1159 444,1159 453,1207 498,1207 507,1254 596,1254 615,1159 623,1159 632,1063 640,1063 658,968 667,968 677,920 712,920 722,872 740,872 748,825 757,825 766,729 790,682 810,600 830,539 848,539"/>
    <polyline class="s c372" points="0,880 25,729 35,729 44,682 62,634 80,634 105,539 115,539 141,443 168,443 177,396 213,396 222,500 240,729 258,825 275,920 285,920 310,1016 345,1016 355,1063 382,1063 391,1111 444,1111 454,1159 490,1159 500,1207 596,1207 606,1111 623,1016 640,920 660,825 680,825 698,777 730,777 739,729 750,729 765,634 775,586 790,586 810,443 820,443 830,396 838,396 848,348"/>
    <polyline class="s c371" points="0,890 25,729 45,729 62,634 98,634 115,539 125,491 135,539 150,491 177,443 213,443 232,634 240,729 248,729 258,825 275,968 300,968 310,1016 330,1111 355,1111 372,1159 400,1159 410,1207 435,1207 445,1254 525,1254 533,1302 580,1302 590,1254 606,1159 640,968 657,872 712,872 722,825 732,825 740,777 757,777 770,682 790,620 810,586 830,491 848,491"/>
    <polyline class="s c35" points="0,1111 42,1111 52,1063 80,1063 88,1016 124,1016 132,920 140,872 150,872 160,825 205,825 213,777 232,777 240,825 248,872 258,872 268,920 275,968 295,1016 322,1016 330,1111 430,1111 437,1159 498,1159 506,1207 596,1207 606,1159 650,1159 667,1063 676,920 712,920 722,872 732,920 748,920 757,872 766,872 775,825 802,825 811,777 848,777"/>
    <polyline class="s c39" points="0,739 8,777 35,777 45,729 62,634 80,586 105,586 123,491 135,491 150,491 168,539 186,539 195,586 213,586 232,682 250,777 268,777 277,825 295,825 303,872 330,872 338,920 445,920 454,968 578,968 597,872 606,872 623,777 640,729 650,682 660,634 705,634 715,539 722,491 730,539 748,539 757,491 775,586 793,586 802,539 825,539 835,586 848,586"/>
    <polyline class="s c32" points="0,860 8,825 16,825 33,729 52,729 62,682 97,682 115,586 123,586 141,539 150,491 177,491 186,443 213,443 222,491 232,539 240,539 250,634 268,682 277,777 295,777 303,825 312,825 320,872 330,872 338,920 365,920 373,968 391,968 400,1016 418,1016 427,1063 481,1063 490,1111 560,1111 570,1159 578,1111 588,1111 606,1016 623,1016 640,920 658,825 686,825 695,777 712,777 721,729 748,729 766,634 811,634 820,586 830,586 838,539 848,539"/>
    <polyline class="s c34" points="0,1302 35,1302 44,1254 62,1254 70,1207 98,1207 106,1159 160,1159 168,1111 240,1111 248,1159 320,1159 329,1207 455,1207 462,1254 640,1254 650,1207 686,1207 695,1159 730,1159 739,1207 748,1159 766,1159 775,1111 793,1111 801,1063 811,1111 829,1111 838,1063 848,1063"/>
  </g>
</svg>

<div id="bottom"></div>
</body>
</html>
